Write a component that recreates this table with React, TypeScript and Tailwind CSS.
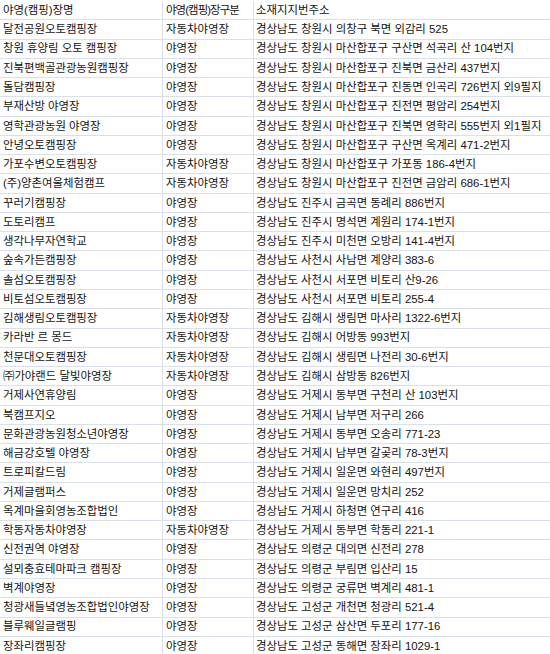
import React from "react";

const rows: [string, string, string][] = [
  ["달전공원오토캠핑장", "자동차야영장", "경상남도 창원시 의창구 북면 외감리 525"],
  ["창원 휴양림 오토 캠핑장", "야영장", "경상남도 창원시 마산합포구 구산면 석곡리 산 104번지"],
  ["진북편백골관광농원캠핑장", "야영장", "경상남도 창원시 마산합포구 진북면 금산리 437번지"],
  ["돌담캠핑장", "야영장", "경상남도 창원시 마산합포구 진동면 인곡리 726번지 외9필지"],
  ["부재산방 야영장", "야영장", "경상남도 창원시 마산합포구 진전면 평암리 254번지"],
  ["영학관광농원 야영장", "야영장", "경상남도 창원시 마산합포구 진북면 영학리 555번지 외1필지"],
  ["안녕오토캠핑장", "야영장", "경상남도 창원시 마산합포구 구산면 옥계리 471-2번지"],
  ["가포수변오토캠핑장", "자동차야영장", "경상남도 창원시 마산합포구 가포동 186-4번지"],
  ["(주)양촌여울체험캠프", "자동차야영장", "경상남도 창원시 마산합포구 진전면 금암리 686-1번지"],
  ["꾸러기캠핑장", "야영장", "경상남도 진주시 금곡면 동례리 886번지"],
  ["도토리캠프", "야영장", "경상남도 진주시 명석면 계원리 174-1번지"],
  ["생각나무자연학교", "야영장", "경상남도 진주시 미천면 오방리 141-4번지"],
  ["숲속가든캠핑장", "야영장", "경상남도 사천시 사남면 계양리 383-6"],
  ["솔섬오토캠핑장", "야영장", "경상남도 사천시 서포면 비토리 산9-26"],
  ["비토섬오토캠핑장", "야영장", "경상남도 사천시 서포면 비토리 255-4"],
  ["김해생림오토캠핑장", "자동차야영장", "경상남도 김해시 생림면 마사리 1322-6번지"],
  ["카라반 르 몽드", "자동차야영장", "경상남도 김해시 어방동 993번지"],
  ["천문대오토캠핑장", "자동차야영장", "경상남도 김해시 생림면 나전리 30-6번지"],
  ["㈜가야랜드 달빛야영장", "자동차야영장", "경상남도 김해시 삼방동 826번지"],
  ["거제사연휴양림", "야영장", "경상남도 거제시 동부면 구천리 산 103번지"],
  ["북캠프지오", "야영장", "경상남도 거제시 남부면 저구리 266"],
  ["문화관광농원청소년야영장", "야영장", "경상남도 거제시 동부면 오송리 771-23"],
  ["해금강호텔 야영장", "야영장", "경상남도 거제시 남부면 갈곶리 78-3번지"],
  ["트로피칼드림", "야영장", "경상남도 거제시 일운면 와현리 497번지"],
  ["거제글램퍼스", "야영장", "경상남도 거제시 일운면 망치리 252"],
  ["옥계마을회영농조합법인", "야영장", "경상남도 거제시 하청면 연구리 416"],
  ["학동자동차야영장", "자동차야영장", "경상남도 거제시 동부면 학동리 221-1"],
  ["신전권역 야영장", "야영장", "경상남도 의령군 대의면 신전리 278"],
  ["설뫼충효테마파크 캠핑장", "야영장", "경상남도 의령군 부림면 입산리 15"],
  ["벽계야영장", "야영장", "경상남도 의령군 궁류면 벽계리 481-1"],
  ["청광새들녘영농조합법인야영장", "야영장", "경상남도 고성군 개천면 청광리 521-4"],
  ["블루웨일글램핑", "야영장", "경상남도 고성군 삼산면 두포리 177-16"],
  ["장좌리캠핑장", "야영장", "경상남도 고성군 동해면 장좌리 1029-1"],
];

function Row({ cells, header = false }: { cells: [string, string, string]; header?: boolean }) {
  return (
    <div className="grid grid-cols-[163px_91px_1fr] h-[19.27px] border-b border-[#d9e0ea]">
      <div className="border-r border-[#d9e0ea] pl-[3px] pt-px flex items-center whitespace-nowrap overflow-hidden">
        {cells[0]}
      </div>
      <div
        className={
          header
            ? "border-r border-[#d9e0ea] pl-[3px] pt-px flex items-center whitespace-nowrap overflow-hidden tracking-[-0.9px]"
            : "border-r border-[#d9e0ea] pl-[3px] pt-px flex items-center whitespace-nowrap overflow-hidden"
        }
      >
        {cells[1]}
      </div>
      <div className="pl-[2px] pt-px flex items-center whitespace-nowrap overflow-hidden">{cells[2]}</div>
    </div>
  );
}

export default function App() {
  return (
    <div
      className="w-[550px] h-[654px] overflow-hidden bg-white text-[11.4px] text-[#141414] leading-none"
      style={{ fontFamily: '"Liberation Sans", "Noto Sans CJK KR", sans-serif' }}
    >
      <div className="border-t border-[#a7b8cf] -mt-px pt-px">
        <Row header cells={["야영(캠핑)장명", "야영(캠핑)장구분", "소재지지번주소"]} />
        {rows.map((r, i) => (
          <Row key={i} cells={r} />
        ))}
      </div>
    </div>
  );
}
